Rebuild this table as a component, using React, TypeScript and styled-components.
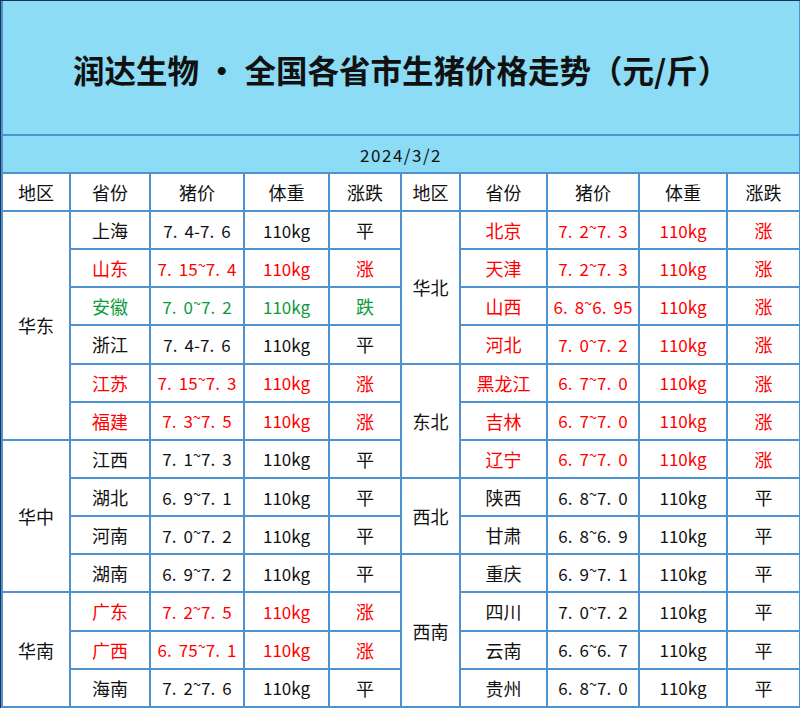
import React from "react";
import styled, { createGlobalStyle } from "styled-components";

const GlobalStyle = createGlobalStyle`
  html, body {
    margin: 0;
    padding: 0;
    background: #ffffff;
  }
  body {
    font-family: "Noto Sans CJK SC", "Noto Sans", sans-serif;
  }
`;

const Frame = styled.div`
  width: 799px;
  border-top: 1px solid #1d3550;
  border-left: 1px solid #1d3550;
`;

const Sheet = styled.table`
  width: 798px;
  border-collapse: collapse;
  table-layout: fixed;
`;

const TitleCell = styled.td`
  height: 130px;
  background: #8cdcf6;
  border: 2px solid #4f92d0;
  border-top: none;
  text-align: center;
  vertical-align: middle;
  font-size: 31.5px;
  font-weight: 700;
  color: #111;
  padding: 3px 0 0 0;
`;

const DateCell = styled.td`
  height: 36px;
  background: #8cdcf6;
  border: 2px solid #4f92d0;
  text-align: center;
  vertical-align: middle;
  font-size: 17px;
  letter-spacing: 1.5px;
  color: #111;
  padding: 0;
`;

const HeadCell = styled.th`
  height: 36px;
  background: #ffffff;
  border: 2px solid #4f92d0;
  font-size: 18px;
  font-weight: 400;
  color: #111;
  text-align: center;
  vertical-align: middle;
  padding: 0;
`;

const RegionCell = styled.td`
  border: 2px solid #4f92d0;
  font-size: 18px;
  font-weight: 400;
  color: #111;
  text-align: center;
  vertical-align: middle;
  padding: 0;
`;

const Cell = styled.td<{ $tone: string; $num?: boolean }>`
  height: 36.15px;
  border: 2px solid #4f92d0;
  font-size: ${(p) => (p.$num ? "17px" : "18px")};
  color: ${(p) => p.$tone};
  text-align: center;
  vertical-align: middle;
  padding: 0;
  white-space: nowrap;
`;

const Dot = styled.span`
  padding-right: 0.42em;
`;

const Tilde = styled.span`
  display: inline-block;
  font-size: 0.85em;
  vertical-align: 0.35em;
  line-height: 1;
`;

const Middle = styled.span`
  margin: 0 7px;
`;

type Entry = [string, string, string];
type Group = { region: string; rows: Entry[] };

const left: Group[] = [
  {
    region: "华东",
    rows: [
      ["上海", "7.4-7.6", "平"],
      ["山东", "7.15~7.4", "涨"],
      ["安徽", "7.0~7.2", "跌"],
      ["浙江", "7.4-7.6", "平"],
      ["江苏", "7.15~7.3", "涨"],
      ["福建", "7.3~7.5", "涨"],
    ],
  },
  {
    region: "华中",
    rows: [
      ["江西", "7.1~7.3", "平"],
      ["湖北", "6.9~7.1", "平"],
      ["河南", "7.0~7.2", "平"],
      ["湖南", "6.9~7.2", "平"],
    ],
  },
  {
    region: "华南",
    rows: [
      ["广东", "7.2~7.5", "涨"],
      ["广西", "6.75~7.1", "涨"],
      ["海南", "7.2~7.6", "平"],
    ],
  },
];

const right: Group[] = [
  {
    region: "华北",
    rows: [
      ["北京", "7.2~7.3", "涨"],
      ["天津", "7.2~7.3", "涨"],
      ["山西", "6.8~6.95", "涨"],
      ["河北", "7.0~7.2", "涨"],
    ],
  },
  {
    region: "东北",
    rows: [
      ["黑龙江", "6.7~7.0", "涨"],
      ["吉林", "6.7~7.0", "涨"],
      ["辽宁", "6.7~7.0", "涨"],
    ],
  },
  {
    region: "西北",
    rows: [
      ["陕西", "6.8~7.0", "平"],
      ["甘肃", "6.8~6.9", "平"],
    ],
  },
  {
    region: "西南",
    rows: [
      ["重庆", "6.9~7.1", "平"],
      ["四川", "7.0~7.2", "平"],
      ["云南", "6.6~6.7", "平"],
      ["贵州", "6.8~7.0", "平"],
    ],
  },
];

type Flat = { region: string | null; span: number; entry: Entry };

const flatten = (groups: Group[]): Flat[] =>
  groups.flatMap((g) =>
    g.rows.map((entry, i) => ({
      region: i === 0 ? g.region : null,
      span: g.rows.length,
      entry,
    }))
  );

const toneOf = (trend: string) =>
  trend === "涨" ? "#ff0000" : trend === "跌" ? "#0b9b3a" : "#111111";

const Price = ({ value }: { value: string }) => (
  <>
    {value.split("").map((ch, i) =>
      ch === "." ? (
        <Dot key={i}>.</Dot>
      ) : ch === "~" ? (
        <Tilde key={i}>~</Tilde>
      ) : (
        <span key={i}>{ch}</span>
      )
    )}
  </>
);

const widths = [68, 80, 94, 85, 72, 59, 87, 92, 88, 73];
const heads = ["地区", "省份", "猪价", "体重", "涨跌", "地区", "省份", "猪价", "体重", "涨跌"];

const Side = ({ item }: { item: Flat }) => {
  const [prov, price, trend] = item.entry;
  const tone = toneOf(trend);
  return (
    <>
      {item.region && <RegionCell rowSpan={item.span}>{item.region}</RegionCell>}
      <Cell $tone={tone}>{prov}</Cell>
      <Cell $tone={tone} $num>
        <Price value={price} />
      </Cell>
      <Cell $tone={tone} $num>
        110kg
      </Cell>
      <Cell $tone={tone}>{trend}</Cell>
    </>
  );
};

const App = () => {
  const l = flatten(left);
  const r = flatten(right);
  return (
    <>
      <GlobalStyle />
      <Frame>
        <Sheet>
          <colgroup>
            {widths.map((w, i) => (
              <col key={i} style={{ width: w }} />
            ))}
          </colgroup>
          <tbody>
            <tr>
              <TitleCell colSpan={10}>
                润达生物<Middle>·</Middle>全国各省市生猪价格走势（元/斤）
              </TitleCell>
            </tr>
            <tr>
              <DateCell colSpan={10}>2024/3/2</DateCell>
            </tr>
            <tr>
              {heads.map((h, i) => (
                <HeadCell key={i}>{h}</HeadCell>
              ))}
            </tr>
            {l.map((item, i) => (
              <tr key={i}>
                <Side item={item} />
                <Side item={r[i]} />
              </tr>
            ))}
          </tbody>
        </Sheet>
      </Frame>
    </>
  );
};

export default App;
